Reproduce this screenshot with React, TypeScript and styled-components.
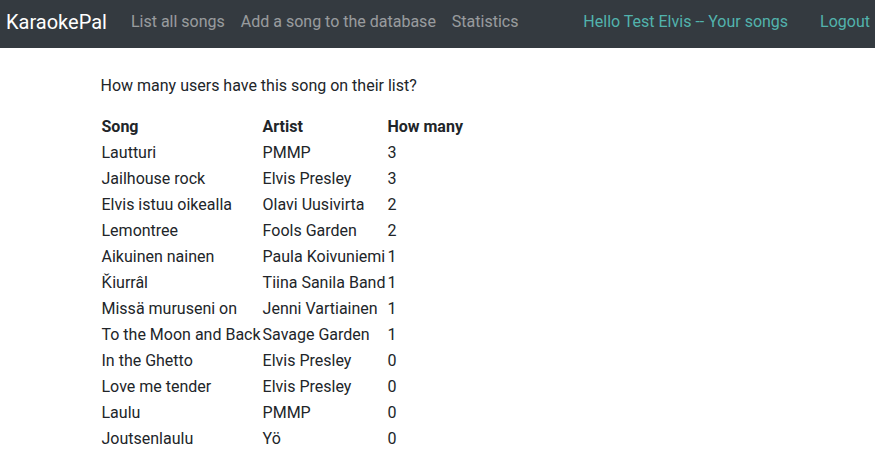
import styled, { createGlobalStyle } from "styled-components";

const GlobalStyle = createGlobalStyle`
  body {
    margin: 0;
    font-family: Roboto, "Liberation Sans", sans-serif;
    font-size: 16px;
    line-height: 1.5;
    color: #212529;
    background: #fff;
  }
`;

type Row = { song: string; artist: string; count: number };

const rows: Row[] = [
  { song: "Lautturi", artist: "PMMP", count: 3 },
  { song: "Jailhouse rock", artist: "Elvis Presley", count: 3 },
  { song: "Elvis istuu oikealla", artist: "Olavi Uusivirta", count: 2 },
  { song: "Lemontree", artist: "Fools Garden", count: 2 },
  { song: "Aikuinen nainen", artist: "Paula Koivuniemi", count: 1 },
  { song: "Ǩiurrâl", artist: "Tiina Sanila Band", count: 1 },
  { song: "Missä muruseni on", artist: "Jenni Vartiainen", count: 1 },
  { song: "To the Moon and Back", artist: "Savage Garden", count: 1 },
  { song: "In the Ghetto", artist: "Elvis Presley", count: 0 },
  { song: "Love me tender", artist: "Elvis Presley", count: 0 },
  { song: "Laulu", artist: "PMMP", count: 0 },
  { song: "Joutsenlaulu", artist: "Yö", count: 0 },
];

const App = () => {
  return (
    <>
      <GlobalStyle />
      <Nav>
        <Brand href="#">KaraokePal</Brand>
        <NavList>
          <NavLink href="#">List all songs</NavLink>
          <NavLink href="#">Add a song to the database</NavLink>
          <NavLink href="#">Statistics</NavLink>
        </NavList>
        <UserList>
          <NavLink href="#" $accent>
            Hello Test Elvis -- Your songs
          </NavLink>
          <NavLink href="#" $accent>
            Logout
          </NavLink>
        </UserList>
      </Nav>
      <Main>
        <Intro>How many users have this song on their list?</Intro>
        <Table>
          <thead>
            <tr>
              <Th>Song</Th>
              <Th>Artist</Th>
              <Th>How many</Th>
            </tr>
          </thead>
          <tbody>
            {rows.map((r) => (
              <tr key={r.song}>
                <Td>{r.song}</Td>
                <Td>{r.artist}</Td>
                <Td>{r.count}</Td>
              </tr>
            ))}
          </tbody>
        </Table>
      </Main>
    </>
  );
};

export default App;

const Nav = styled.nav`
  background: #343a40;
  height: 48px;
  display: flex;
  align-items: center;
  padding: 0 5px 0 6px;
  box-sizing: border-box;
  white-space: nowrap;
`;

const Brand = styled.a`
  color: #fff;
  font-size: 20px;
  text-decoration: none;
  margin-right: 16px;
  padding: 4px 0 8px;
`;

const NavList = styled.div`
  display: flex;
`;

const UserList = styled.div`
  display: flex;
  margin-left: auto;
  gap: 16px;

  & > a:last-child {
    padding-right: 0;
  }
`;

const NavLink = styled.a<{ $accent?: boolean }>`
  color: ${(p) => (p.$accent ? "#52b3ad" : "rgba(255, 255, 255, 0.5)")};
  text-decoration: none;
  padding: 0 8px 4px;
  font-size: 16px;
`;

const Main = styled.main`
  width: 674px;
  margin: 0 auto;
  padding-top: 26px;
`;

const Intro = styled.p`
  margin: 0 0 16px;
`;

const Table = styled.table`
  border-collapse: collapse;
`;

const Th = styled.th`
  text-align: left;
  font-weight: 700;
  padding: 1px 1px;
`;

const Td = styled.td`
  padding: 1px 1px;
`;
